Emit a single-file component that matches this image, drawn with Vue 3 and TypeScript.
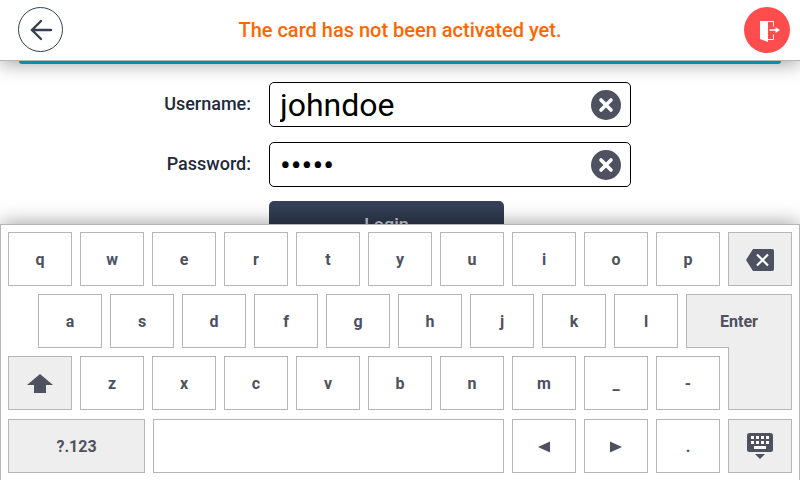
<script setup lang="ts">
import { ref } from 'vue';

const username = ref('johndoe');
const password = ref('12345');

const row1 = ['q', 'w', 'e', 'r', 't', 'y', 'u', 'i', 'o', 'p'];
const row2 = ['a', 's', 'd', 'f', 'g', 'h', 'j', 'k', 'l'];
const row3 = ['z', 'x', 'c', 'v', 'b', 'n', 'm', '_', '-'];
</script>

<template>
  <div class="screen">
    <header class="topbar">
      <button class="back-btn" aria-label="Back">
        <svg width="26" height="26" viewBox="0 0 26 26" fill="none">
          <path d="M23 13H4M13 4l-9 9 9 9" stroke="#36404f" stroke-width="2.4" stroke-linecap="round" />
        </svg>
      </button>
      <div class="title">The card has not been activated yet.</div>
      <button class="exit-btn" aria-label="Exit">
        <svg width="30" height="24" viewBox="0 0 30 24">
          <path d="M8 3h8v21l-8-3z" fill="#fff" />
          <path d="M16 3.500h5.500v5M21.500 16.500v5H16" fill="none" stroke="#fff" stroke-width="1" />
          <path d="M17.500 11.200h6V9l4.500 3-4.500 3v-2.200h-6z" fill="#fff" />
        </svg>
      </button>
    </header>
    <div class="accent"></div>

    <main class="form">
      <div class="field">
        <label class="label">Username:</label>
        <div class="input-box">
          <input v-model="username" class="input" type="text" />
          <button class="clear-btn" aria-label="Clear">
            <svg width="16" height="16" viewBox="0 0 16 16">
              <path d="M3 3l10 10M13 3L3 13" stroke="#fff" stroke-width="3.600" stroke-linecap="round" />
            </svg>
          </button>
        </div>
      </div>
      <div class="field">
        <label class="label">Password:</label>
        <div class="input-box">
          <input v-model="password" class="input" type="password" />
          <button class="clear-btn" aria-label="Clear">
            <svg width="16" height="16" viewBox="0 0 16 16">
              <path d="M3 3l10 10M13 3L3 13" stroke="#fff" stroke-width="3.600" stroke-linecap="round" />
            </svg>
          </button>
        </div>
      </div>
      <button class="login">Login</button>
    </main>

    <section class="keyboard">
      <div class="row">
        <div v-for="k in row1" :key="k" class="key">{{ k }}</div>
        <div class="key fn">
          <svg width="28" height="22" viewBox="0 0 28 22">
            <path d="M7 0h19a2 2 0 0 1 2 2v18a2 2 0 0 1-2 2H7L0 11z" fill="#4d5160" />
            <path d="M11 5.500l11 11M22 5.500l-11 11" stroke="#fff" stroke-width="2.200" />
          </svg>
        </div>
      </div>
      <div class="row">
        <div class="indent"></div>
        <div v-for="k in row2" :key="k" class="key">{{ k }}</div>
        <div class="key fn enter-top">Enter</div>
      </div>
      <div class="row">
        <div class="key fn">
          <svg width="26" height="19" viewBox="0 0 26 19">
            <path d="M13 0l13 11h-7v8H7v-8H0z" fill="#4d5160" />
          </svg>
        </div>
        <div v-for="k in row3" :key="k" class="key">{{ k }}</div>
        <div class="key fn enter-bottom"></div>
      </div>
      <div class="row last">
        <div class="key fn sym">?.123</div>
        <div class="key space"></div>
        <div class="key">
          <svg width="12" height="12" viewBox="0 0 12 12"><path d="M12 .5v11L0 6z" fill="#4d5160" /></svg>
        </div>
        <div class="key">
          <svg width="12" height="12" viewBox="0 0 12 12"><path d="M0 .5v11L12 6z" fill="#4d5160" /></svg>
        </div>
        <div class="key">.</div>
        <div class="key fn">
          <svg width="26" height="27" viewBox="0 0 26 27">
            <rect width="26" height="19" rx="2.500" fill="#4d5160" />
            <path
              d="M4 3h3v3H4zM9 3h3v3H9zM14 3h3v3h-3zM19 3h3v3h-3zM4 8h3v3H4zM9 8h3v3H9zM14 8h3v3h-3zM19 8h3v3h-3zM7 13h12v3H7z"
              fill="#fff"
            />
            <path d="M8 21h10l-5 5z" fill="#4d5160" />
          </svg>
        </div>
      </div>
    </section>
  </div>
</template>

<style>
body {
  margin: 0;
}
</style>

<style scoped>
.screen {
  position: relative;
  width: 800px;
  height: 480px;
  overflow: hidden;
  background: #fff;
  font-family: Roboto, "Liberation Sans", sans-serif;
}

button {
  padding: 0;
  border: 0;
  font-family: inherit;
}

.topbar {
  position: relative;
  z-index: 2;
  display: flex;
  align-items: center;
  justify-content: space-between;
  box-sizing: border-box;
  height: 61px;
  padding: 0 10px 1px 18px;
  border-bottom: 1px solid #b5b5b5;
  background: #fff;
  box-shadow: 0 2px 20px rgba(0, 0, 0, 0.4);
}

.back-btn {
  display: flex;
  align-items: center;
  justify-content: center;
  box-sizing: border-box;
  width: 45px;
  height: 45px;
  border: 1px solid #36404f;
  border-radius: 50%;
  background: #fff;
}

.title {
  margin-right: 7px;
  color: #ff6600;
  font-size: 20px;
  font-weight: 500;
}

.exit-btn {
  display: flex;
  align-items: center;
  justify-content: center;
  width: 46px;
  height: 46px;
  border-radius: 50%;
  background: #ff4d4d;
}

.accent {
  position: relative;
  z-index: 2;
  height: 3px;
  margin: 0 19px;
  border-radius: 0 0 4px 4px;
  background: #0090b8;
}

.form {
  display: flex;
  flex-direction: column;
  align-items: flex-start;
  padding-top: 18px;
}

.field {
  display: flex;
  align-items: center;
  height: 45px;
  margin-bottom: 15px;
}

.label {
  width: 251px;
  margin: 0 18px 2px 0;
  color: #1e2a3a;
  font-size: 18px;
  font-weight: 500;
  text-align: right;
}

.input-box {
  display: flex;
  align-items: center;
  box-sizing: border-box;
  width: 362px;
  height: 45px;
  padding: 0 9px 0 10px;
  border: 1px solid #000;
  border-radius: 5px;
  background: #fff;
}

.input {
  flex: 1;
  min-width: 0;
  padding: 0;
  border: 0;
  outline: 0;
  color: #000;
  font-family: inherit;
  font-size: 32px;
}

.clear-btn {
  display: flex;
  align-items: center;
  justify-content: center;
  width: 30px;
  height: 30px;
  border-radius: 50%;
  background: #4d5160;
}

.login {
  width: 235px;
  height: 46px;
  margin: -1px 0 0 269px;
  border-radius: 5px;
  background: linear-gradient(180deg, #36425a, #262e3e);
  color: #c9ced6;
  font-size: 18px;
  font-weight: 500;
}

.keyboard {
  position: absolute;
  z-index: 3;
  left: 0;
  right: 0;
  bottom: 0;
  display: flex;
  flex-direction: column;
  gap: 8px;
  box-sizing: border-box;
  height: 256px;
  padding: 7px 7px 0;
  border: 1px solid #b5b5b5;
  border-bottom: 0;
  background: #fff;
  box-shadow: 0 0 20px rgba(0, 0, 0, 0.4);
}

.row {
  display: flex;
  gap: 8px;
  height: 54px;
}

.row.last {
  margin-top: 1px;
}

.indent {
  width: 22px;
}

.key {
  display: flex;
  flex: none;
  align-items: center;
  justify-content: center;
  box-sizing: border-box;
  width: 64px;
  height: 54px;
  padding-top: 1px;
  border: 1px solid #b5b5b5;
  background: #fff;
  color: #4d5160;
  font-size: 16px;
  font-weight: 700;
}

.key.fn {
  background: #eee;
}

.enter-top {
  width: 106px;
}

.enter-bottom {
  height: 63px;
  margin-top: -9px;
  border-top: 0;
}

.sym {
  width: 137px;
}

.space {
  width: 351px;
}
</style>
